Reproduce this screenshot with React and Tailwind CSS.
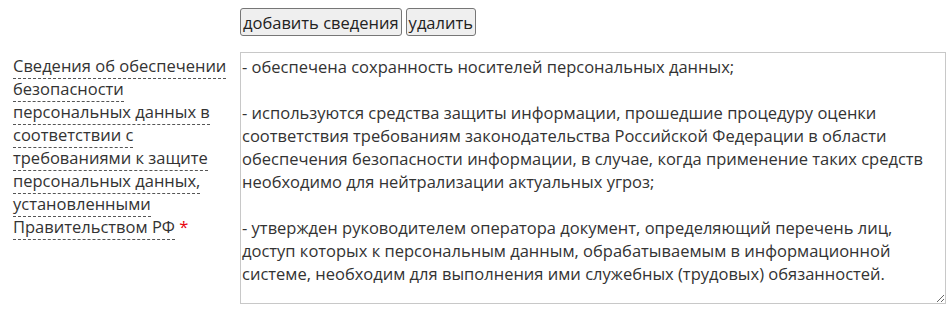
const TEXT = `- обеспечена сохранность носителей персональных данных;

- используются средства защиты информации, прошедшие процедуру оценки соответствия требованиям законодательства Российской Федерации в области обеспечения безопасности информации, в случае, когда применение таких средств необходимо для нейтрализации актуальных угроз;

- утвержден руководителем оператора документ, определяющий перечень лиц, доступ которых к персональным данным, обрабатываемым в информационной системе, необходим для выполнения ими служебных (трудовых) обязанностей.`;

export default function App() {
  return (
    <div className="w-[947px] h-[326px] bg-white text-[#333] text-[16.5px] leading-[23px] font-['Open_Sans',sans-serif]">
      <div className="flex gap-[4px] pl-[240px] pt-[8px]">
        <button className="h-[28px] px-[2px] bg-[#efefef] border border-[#767676] rounded-[3px] text-[16.5px] text-[#222]">
          добавить сведения
        </button>
        <button className="h-[28px] px-[2px] bg-[#efefef] border border-[#767676] rounded-[3px] text-[16.5px] text-[#222]">
          удалить
        </button>
      </div>

      <div className="flex mt-[16px]">
        <div className="w-[240px] pl-[13px] pr-[8px] pt-[2px]">
          <label className="border-b border-dashed border-[#555] pb-[1px]">
            Сведения об обеспечении безопасности персональных данных в соответствии с требованиями к защите персональных данных, установленными Правительством РФ
          </label>{' '}
          <span className="text-red-600">*</span>
        </div>
        <textarea
          defaultValue={TEXT}
          className="w-[706px] h-[252px] border border-[#c8c8c8] px-[1px] py-[2px] text-[16.5px] leading-[23px] text-[#333] resize-y overflow-hidden"
        />
      </div>
    </div>
  );
}
